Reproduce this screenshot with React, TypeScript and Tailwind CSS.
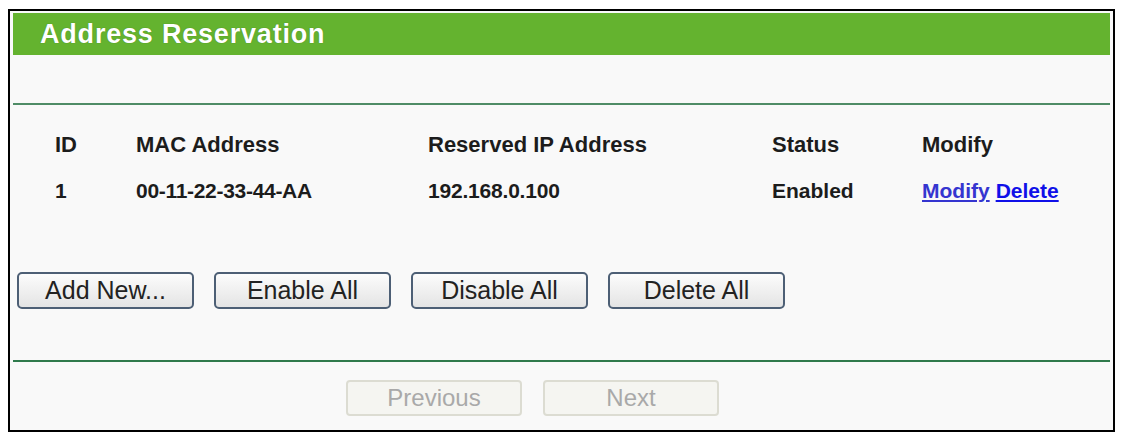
const FONT = { fontFamily: '"Liberation Sans", Arial, Helvetica, sans-serif' };

const columns = [
  { key: "id", label: "ID", w: "w-[81px]" },
  { key: "mac", label: "MAC Address", w: "w-[292px]" },
  { key: "ip", label: "Reserved IP Address", w: "w-[344px]" },
  { key: "status", label: "Status", w: "w-[150px]" },
  { key: "modify", label: "Modify", w: "flex-1" },
];

const actions = ["Add New...", "Enable All", "Disable All", "Delete All"];

function ActionButton({ label }: { label: string }) {
  return (
    <button
      type="button"
      className="h-[37px] w-[177px] rounded-[5px] border-2 border-[#4d5f75] bg-gradient-to-b from-[#fcfcfc] to-[#e4e4e4] text-[25px] leading-none text-[#222]"
    >
      {label}
    </button>
  );
}

function PagerButton({ label }: { label: string }) {
  return (
    <button
      type="button"
      disabled
      className="h-[36px] w-[176px] rounded-[4px] border-2 border-[#dcdcd2] bg-[#f5f5f1] text-[24px] leading-none text-[#a9a9a9]"
    >
      {label}
    </button>
  );
}

export default function App() {
  return (
    <div className="h-[437px] w-[1121px] bg-white pl-[8px] pt-[9px]" style={FONT}>
      <div className="flex h-[423px] w-[1107px] flex-col border-2 border-black bg-[#f9f9f9] px-[3px] pt-[2px]">
        {/* title bar */}
        <div className="flex h-[42px] items-center bg-[#64b32f] pl-[27px]">
          <h1 className="text-[27px] font-bold leading-none tracking-[0.8px] text-white [text-shadow:0_0_1px_#3d7a1a]">
            Address Reservation
          </h1>
        </div>

        <div className="h-[48px]" />
        <div className="h-[2px] bg-[#4f8c66]" />

        {/* table */}
        <div className="pl-[42px] pt-[23px] font-bold leading-none text-[#1c1c1c]">
          <div className="flex h-[45px] items-start pt-[6px] text-[22px]">
            {columns.map((c) => (
              <div key={c.key} className={c.w}>
                {c.label}
              </div>
            ))}
          </div>
          <div className="flex h-[45px] items-start pt-[7px] text-[21px]">
            <div className="w-[81px]">1</div>
            <div className="w-[292px] tracking-[-0.3px]">00-11-22-33-44-AA</div>
            <div className="w-[344px] tracking-[-0.2px]">192.168.0.100</div>
            <div className="w-[150px]">Enabled</div>
            <div className="flex flex-1 gap-[6px]">
              <a href="#" className="text-[#3535d0] underline">
                Modify
              </a>
              <a href="#" className="text-[#1010e8] underline">
                Delete
              </a>
            </div>
          </div>
        </div>

        {/* actions */}
        <div className="flex gap-[20px] pl-[4px] pt-[54px]">
          {actions.map((a) => (
            <ActionButton key={a} label={a} />
          ))}
        </div>

        <div className="h-[51px]" />
        <div className="h-[2px] bg-[#2f7a4c]" />

        {/* pager */}
        <div className="flex gap-[21px] pl-[333px] pt-[18px]">
          <PagerButton label="Previous" />
          <PagerButton label="Next" />
        </div>
      </div>
    </div>
  );
}
